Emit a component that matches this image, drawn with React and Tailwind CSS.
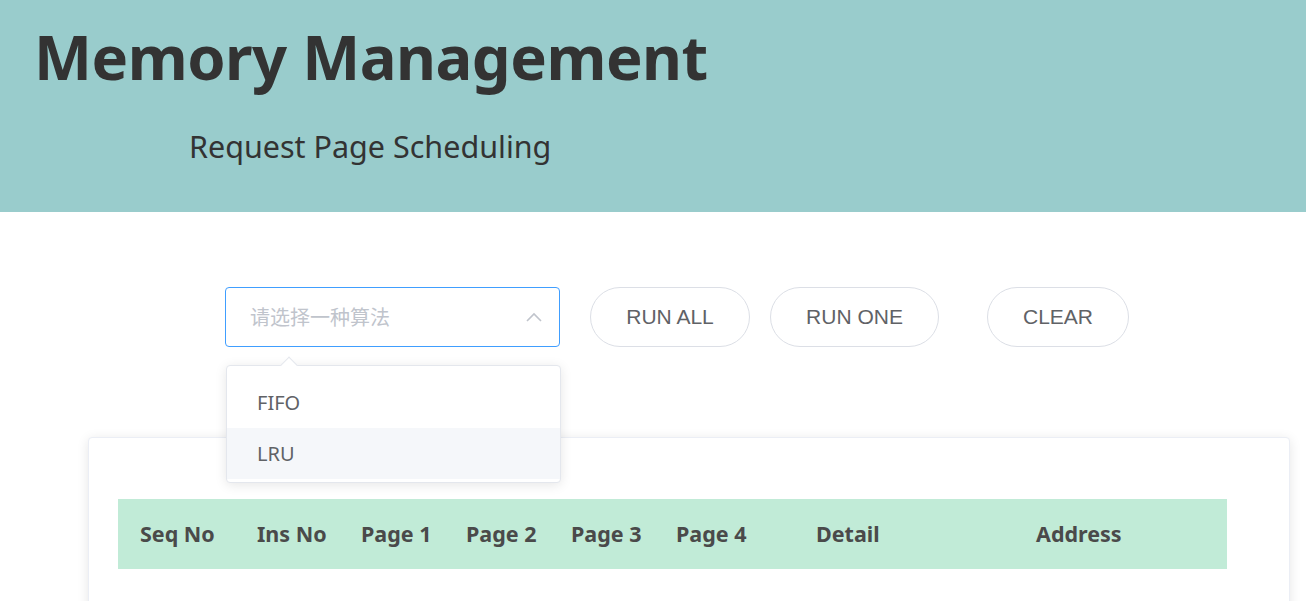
import { useState } from "react";

const columns = [
  { label: "Seq No", w: "w-[117px]" },
  { label: "Ins No", w: "w-[104px]" },
  { label: "Page 1", w: "w-[105px]" },
  { label: "Page 2", w: "w-[105px]" },
  { label: "Page 3", w: "w-[105px]" },
  { label: "Page 4", w: "w-[140px]" },
  { label: "Detail", w: "w-[220px]" },
  { label: "Address", w: "w-[213px]" },
];

const options = ["FIFO", "LRU"];

const App = () => {
  const [hovered, setHovered] = useState("LRU");

  return (
    <div className="min-h-screen bg-white font-['Noto_Sans','Noto_Sans_CJK_SC',sans-serif] overflow-hidden">
      {/* HEADER */}
      <div className="h-[212px] bg-[#99cccc] pt-[16px]">
        <h1 className="pl-[34px] text-[61.5px] leading-[80px] font-bold text-[#333333] tracking-[-0.5px]">
          Memory Management
        </h1>
        <h2 className="pl-[189px] mt-[30px] text-[30.5px] leading-[40px] text-[#333333]">
          Request Page Scheduling
        </h2>
      </div>

      {/* CONTROLS */}
      <div className="flex items-center pl-[225px] pt-[75px]">
        <div className="relative">
          <div className="w-[335px] h-[60px] border border-[#409eff] rounded-[4px] flex items-center justify-between pl-[24px] pr-[17px]">
            <span className="text-[20px] text-[#c0c4cc] font-['Noto_Sans_CJK_SC',sans-serif]">
              请选择一种算法
            </span>
            <svg width="16" height="10" viewBox="0 0 16 10" fill="none">
              <path d="M1 9 L8 2 L15 9" stroke="#c0c4cc" strokeWidth="1.6" />
            </svg>
          </div>

          {/* Dropdown */}
          <div className="absolute left-[1px] top-[78px] z-20 w-[335px] bg-white border border-[#e4e7ed] rounded-[4px] shadow-[0_2px_12px_0_rgba(0,0,0,0.1)] pt-[11px] pb-[3px]">
            <div className="absolute -top-[7px] left-[56px] w-[12px] h-[12px] bg-white border-l border-t border-[#e4e7ed] rotate-45"></div>
            {options.map((o) => (
              <div
                key={o}
                onMouseEnter={() => setHovered(o)}
                className={`h-[51px] flex items-center pl-[30px] text-[20px] text-[#606266] ${
                  hovered === o ? "bg-[#f5f7fa]" : ""
                }`}
              >
                {o}
              </div>
            ))}
          </div>
        </div>

        <button className="ml-[30px] w-[160px] h-[60px] rounded-full border border-[#dcdfe6] text-[21px] text-[#606266] font-['Liberation_Sans',sans-serif]">
          RUN ALL
        </button>
        <button className="ml-[20px] w-[169px] h-[60px] rounded-full border border-[#dcdfe6] text-[21px] text-[#606266] font-['Liberation_Sans',sans-serif]">
          RUN ONE
        </button>
        <button className="ml-[48px] w-[142px] h-[60px] rounded-full border border-[#dcdfe6] text-[21px] text-[#606266] font-['Liberation_Sans',sans-serif]">
          CLEAR
        </button>
      </div>

      {/* TABLE CARD */}
      <div className="ml-[88px] mt-[90px] w-[1202px] h-[300px] bg-white border border-[#ebeef5] rounded-[4px] shadow-[0_2px_12px_0_rgba(0,0,0,0.1)] pt-[61px] pl-[29px]">
        <div className="w-[1109px] h-[70px] bg-[#c1ebd7] flex items-center pt-[1px]">
          {columns.map((c) => (
            <div
              key={c.label}
              className={`${c.w} pl-[22px] text-[21.5px] font-bold text-[#4a4a4a]`}
            >
              {c.label}
            </div>
          ))}
        </div>
      </div>
    </div>
  );
};

export default App;
